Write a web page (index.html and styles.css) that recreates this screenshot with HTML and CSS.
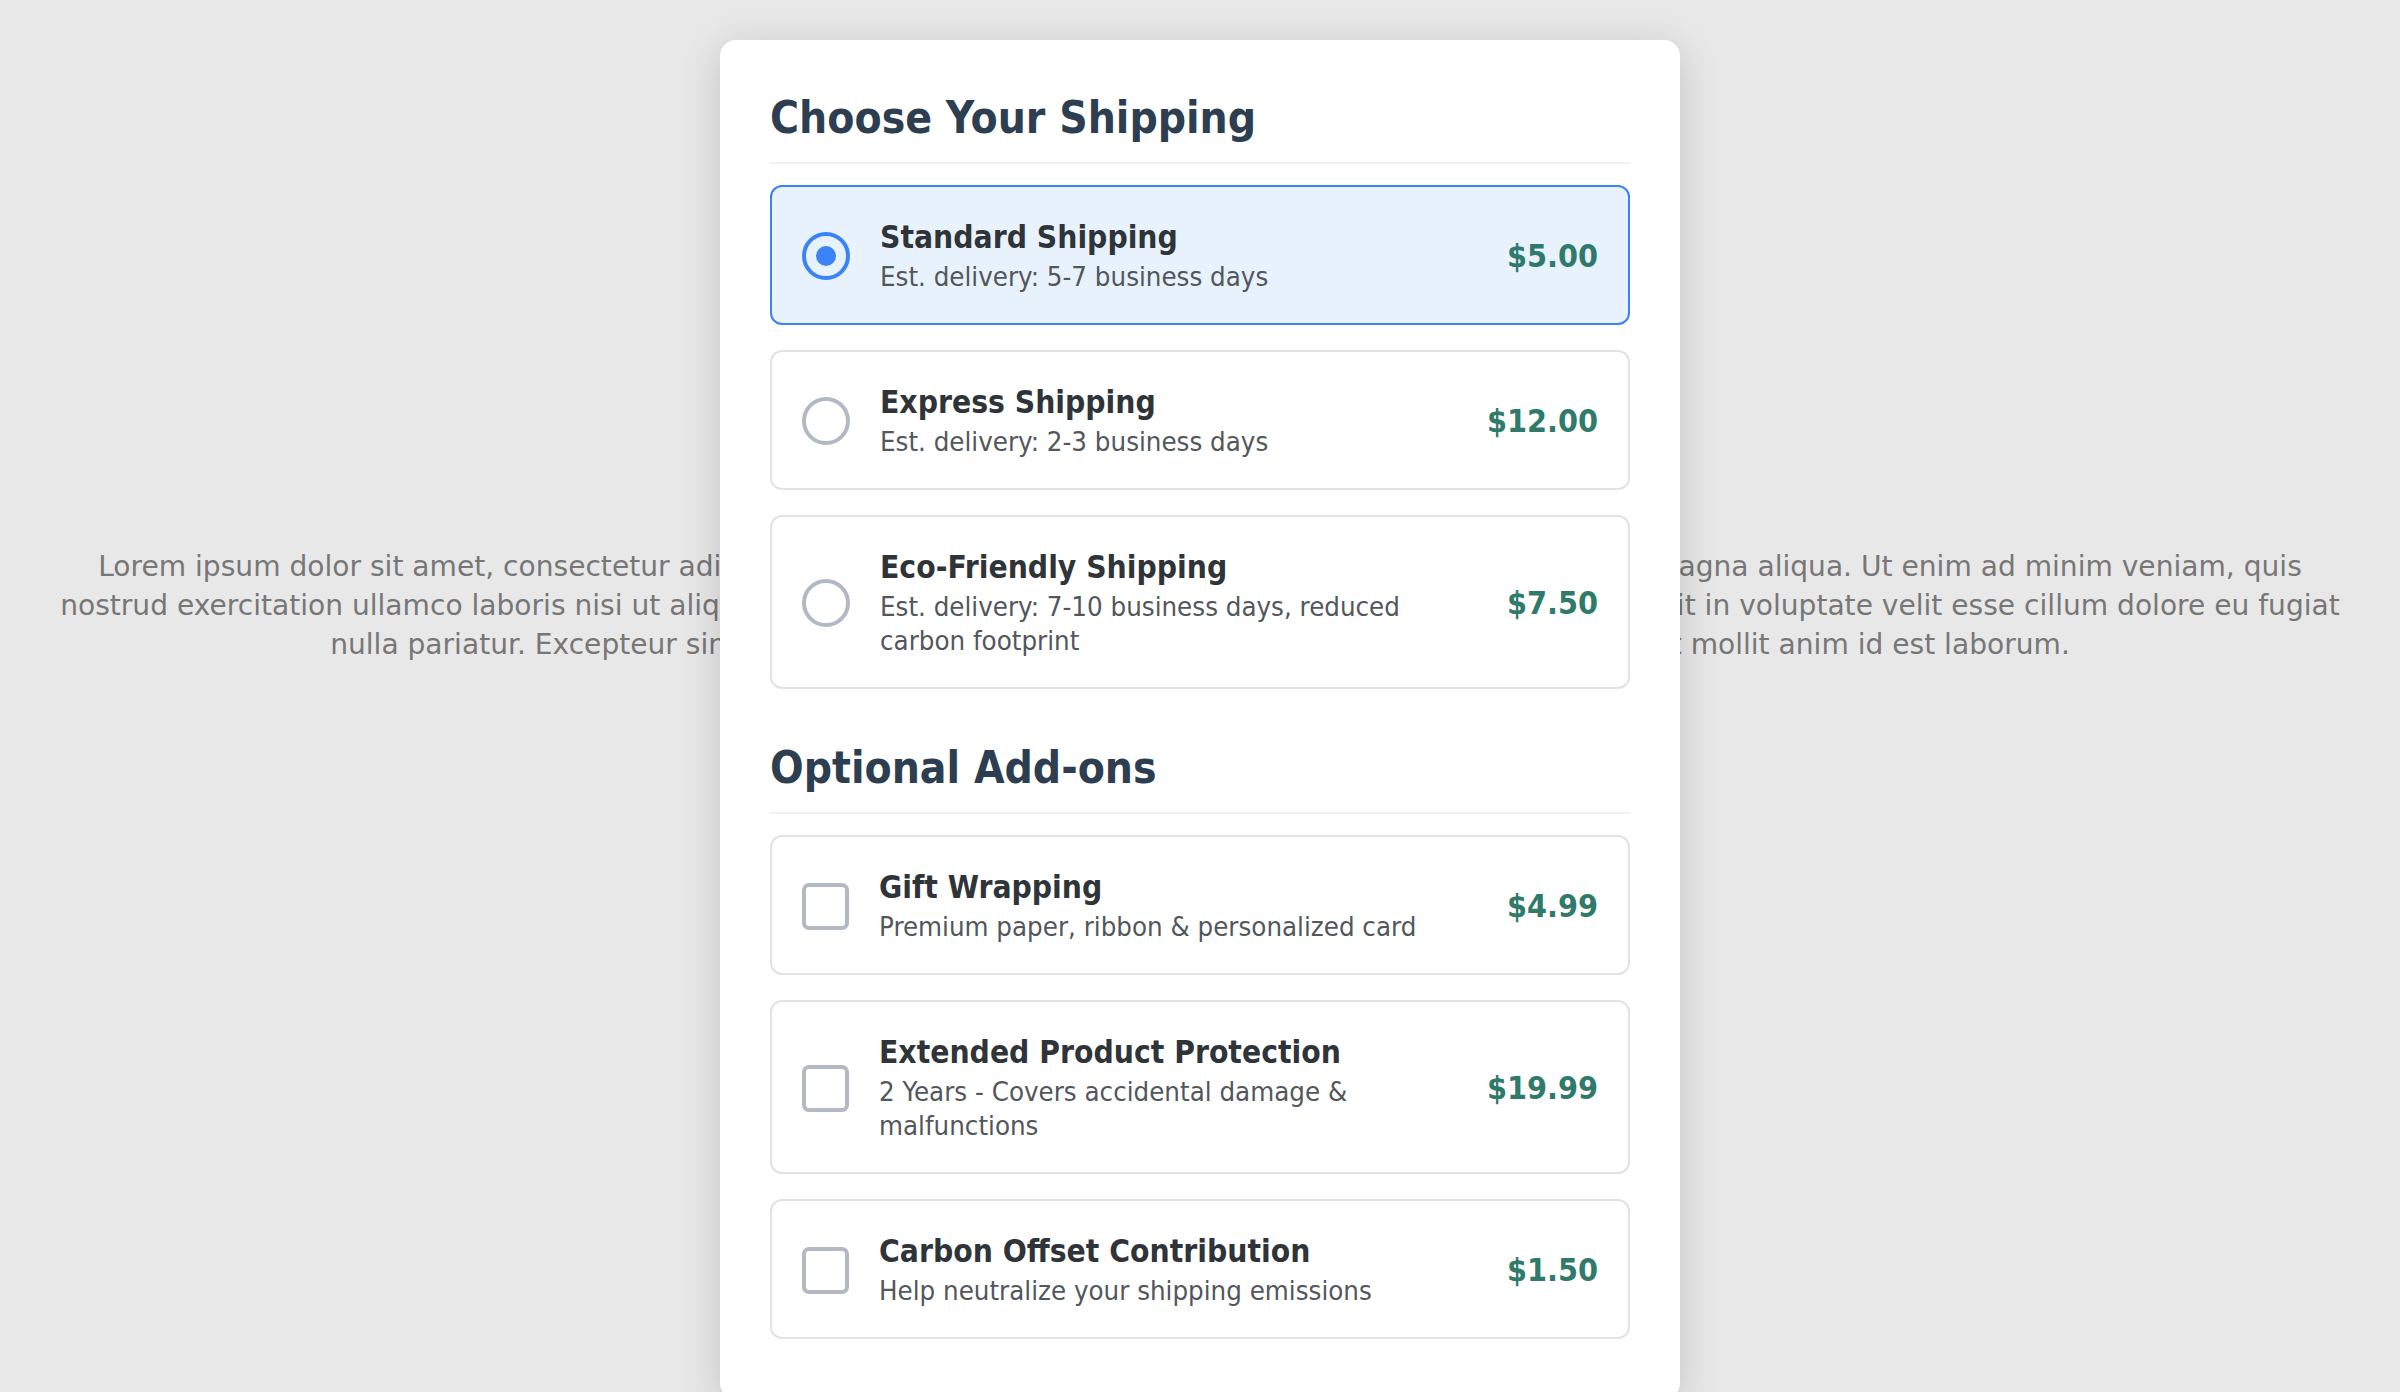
FILE: index.html
```html
<!DOCTYPE html>
<html lang="en">
<head>
<meta charset="utf-8">
<title>Choose Your Shipping</title>
<link rel="stylesheet" href="styles.css">
</head>
<body>
<main class="page">
  <p class="backdrop-text">Lorem ipsum dolor sit amet, consectetur adipiscing elit, sed do eiusmod tempor incididunt ut labore et dolore magna aliqua. Ut enim ad minim veniam, quis nostrud exercitation ullamco laboris nisi ut aliquip ex ea commodo consequat. Duis aute irure dolor in reprehenderit in voluptate velit esse cillum dolore eu fugiat nulla pariatur. Excepteur sint occaecat cupidatat non proident, sunt in culpa qui officia deserunt mollit anim id est laborum.</p>
</main>

<div class="modal">
  <section class="section">
    <h2 class="section-title">Choose Your Shipping</h2>
    <div class="options">
      <label class="option selected">
        <span class="radio checked"></span>
        <span class="info">
          <span class="name">Standard Shipping</span>
          <span class="desc">Est. delivery: 5-7 business days</span>
        </span>
        <span class="price">$5.00</span>
      </label>
      <label class="option">
        <span class="radio"></span>
        <span class="info">
          <span class="name">Express Shipping</span>
          <span class="desc">Est. delivery: 2-3 business days</span>
        </span>
        <span class="price">$12.00</span>
      </label>
      <label class="option">
        <span class="radio"></span>
        <span class="info">
          <span class="name">Eco-Friendly Shipping</span>
          <span class="desc">Est. delivery: 7-10 business days, reduced carbon footprint</span>
        </span>
        <span class="price">$7.50</span>
      </label>
    </div>
  </section>

  <section class="section">
    <h2 class="section-title">Optional Add-ons</h2>
    <div class="options">
      <label class="option">
        <span class="checkbox"></span>
        <span class="info">
          <span class="name">Gift Wrapping</span>
          <span class="desc">Premium paper, ribbon &amp; personalized card</span>
        </span>
        <span class="price">$4.99</span>
      </label>
      <label class="option">
        <span class="checkbox"></span>
        <span class="info">
          <span class="name">Extended Product Protection</span>
          <span class="desc">2 Years - Covers accidental damage &amp; malfunctions</span>
        </span>
        <span class="price">$19.99</span>
      </label>
      <label class="option">
        <span class="checkbox"></span>
        <span class="info">
          <span class="name">Carbon Offset Contribution</span>
          <span class="desc">Help neutralize your shipping emissions</span>
        </span>
        <span class="price">$1.50</span>
      </label>
    </div>
  </section>
</div>
</body>
</html>
```

FILE: styles.css
```css
* {
  box-sizing: border-box;
}

html, body {
  margin: 0;
  padding: 0;
}

body {
  background: #e8e8e8;
  font-family: "DejaVu Sans Condensed", "DejaVu Sans", sans-serif;
  min-height: 100vh;
  overflow: hidden;
}

.page {
  padding: 547px 50px 0;
}

.backdrop-text {
  margin: 0;
  color: #777777;
  font-family: "DejaVu Sans", sans-serif;
  font-size: 28.1px;
  line-height: 39.2px;
  text-align: center;
}

.modal {
  position: absolute;
  top: 40px;
  left: 720px;
  width: 960px;
  background: #ffffff;
  border-radius: 16px;
  box-shadow: 0 8px 40px rgba(0, 0, 0, 0.16);
  padding: 51px 50px 60px;
}

.section + .section {
  margin-top: 52px;
}

.section-title {
  margin: 0 0 21px;
  padding-bottom: 17px;
  border-bottom: 2px solid #edf0f0;
  color: #2c3e50;
  font-size: 44px;
  line-height: 54px;
  font-weight: bold;
}

.options {
  display: flex;
  flex-direction: column;
  gap: 25px;
}

.option {
  display: flex;
  align-items: center;
  padding: 31px 30px 29px;
  border: 2px solid #e2e2e2;
  border-radius: 12px;
  background: #ffffff;
}

.option.selected {
  border-color: #3b82f6;
  background: #e8f2fd;
}

.radio {
  flex: none;
  width: 48px;
  height: 48px;
  border: 4px solid #b2b9c2;
  border-radius: 50%;
  display: flex;
  align-items: center;
  justify-content: center;
}

.radio.checked {
  border-color: #3b82f6;
}

.radio.checked::after {
  content: "";
  width: 20px;
  height: 20px;
  border-radius: 50%;
  background: #3b82f6;
}

.checkbox {
  flex: none;
  width: 47px;
  height: 47px;
  border: 4px solid #b2b9c2;
  border-radius: 7px;
}

.info {
  flex: 1;
  display: flex;
  flex-direction: column;
  margin-left: 30px;
  padding-right: 40px;
}

.name {
  color: #2f3439;
  font-size: 31.5px;
  line-height: 38px;
  font-weight: bold;
  margin-bottom: 4px;
}

.desc {
  color: #52575c;
  font-size: 27.4px;
  line-height: 34px;
}

.price {
  flex: none;
  color: #2f7a6a;
  font-size: 32px;
  font-weight: bold;
}
```
